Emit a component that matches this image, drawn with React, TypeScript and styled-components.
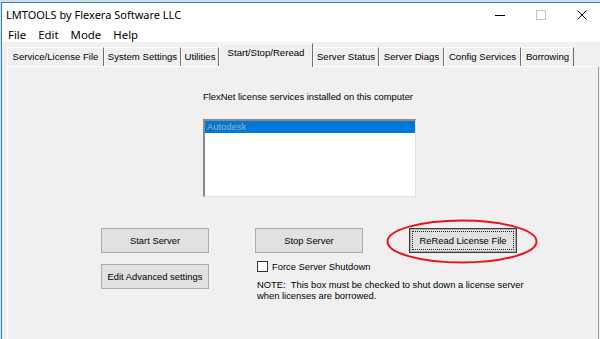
import React from 'react';
import styled, { createGlobalStyle } from 'styled-components';

const GlobalStyle = createGlobalStyle`
  html, body {
    margin: 0;
    padding: 0;
    background: #dcdcdc;
    overflow: hidden;
  }
  body {
    width: 600px;
    height: 339px;
  }
`;

const Window = styled.div`
  margin: 2px 0 0 1px;
  width: 600px;
  height: 337px;
  border-top: 1px solid #1e88d9;
  border-left: 1px solid #1e88d9;
  background: #f0f0f0;
  display: flex;
  flex-direction: column;
  font-family: 'Liberation Sans', Arial, sans-serif;
  color: #000;
  overflow: hidden;
`;

const TitleBar = styled.div`
  height: 23px;
  background: #fff;
  display: flex;
  align-items: center;
  flex-shrink: 0;
`;

const Title = styled.div`
  flex: 1;
  padding-left: 4px;
  font-family: 'Noto Sans', sans-serif;
  font-size: 11px;
  color: #000;
`;

const Controls = styled.div`
  display: flex;
  height: 100%;
`;

const ControlButton = styled.div`
  width: 41px;
  height: 100%;
  display: flex;
  align-items: center;
  justify-content: center;
`;

const MenuBar = styled.div`
  height: 16px;
  background: #fff;
  display: flex;
  align-items: center;
  flex-shrink: 0;
  font-family: 'Noto Sans', sans-serif;
  font-size: 11.4px;
`;

const MenuItem = styled.span`
  padding: 0 6px;
`;

const Client = styled.div`
  flex: 1;
  display: flex;
  flex-direction: column;
  padding-left: 5px;
  border-right: 1px solid #555;
`;

const TabStrip = styled.div`
  height: 24px;
  display: flex;
  align-items: flex-end;
  flex-shrink: 0;
  position: relative;
  z-index: 1;
`;

const Tab = styled.div<{ $w: number; $active?: boolean }>`
  box-sizing: border-box;
  width: ${p => p.$w}px;
  height: ${p => (p.$active ? 24 : 19)}px;
  margin-bottom: ${p => (p.$active ? -1 : 0)}px;
  padding-top: 3px;
  border-top: 1px solid #fff;
  border-left: 1px solid #fff;
  border-right: 1px solid #6d6d6d;
  background: #f0f0f0;
  font-size: 9.6px;
  text-align: center;
  white-space: nowrap;
`;

const Panel = styled.div`
  flex: 1;
  border-top: 1px solid #fff;
  border-left: 1px solid #fff;
  border-right: 1px solid #a0a0a0;
  margin-right: 2px;
  padding-top: 24px;
  font-size: 9.4px;
`;

const ServiceBlock = styled.div`
  margin-left: 195px;
  width: 213px;
`;

const Caption = styled.div`
  height: 12px;
  line-height: 12px;
  white-space: nowrap;
`;

const ListBox = styled.div`
  margin-top: 16px;
  box-sizing: border-box;
  height: 78px;
  background: #fff;
  border-top: 2px solid #8a8a8a;
  border-left: 2px solid #8a8a8a;
  border-right: 1px solid #e3e3e3;
  border-bottom: 1px solid #e3e3e3;
`;

const ListItem = styled.div<{ $selected?: boolean }>`
  height: 12px;
  line-height: 12px;
  padding-left: 2px;
  background: ${p => (p.$selected ? '#0078d7' : 'transparent')};
  color: ${p => (p.$selected ? '#9fb1c4' : '#000')};
`;

const ButtonGrid = styled.div`
  margin: 31px 0 0 93px;
  display: grid;
  grid-template-columns: 108px 108px 108px;
  column-gap: 46px;
  row-gap: 11px;
  position: relative;
`;

const Button = styled.div<{ $default?: boolean }>`
  box-sizing: border-box;
  height: 25px;
  display: flex;
  align-items: center;
  justify-content: center;
  background: #e1e1e1;
  border: 1px solid ${p => (p.$default ? '#3c3c3c' : '#adadad')};
  box-shadow: ${p => (p.$default ? 'inset 0 0 0 1px #adadad' : 'none')};
  padding: 2px;
  white-space: nowrap;
`;

const FocusRect = styled.span`
  flex: 1;
  align-self: stretch;
  display: flex;
  align-items: center;
  justify-content: center;
  border: 1px dotted #222;
`;

const ShutdownColumn = styled.div`
  margin-top: -4px;
  padding-left: 2px;
  white-space: nowrap;
`;

const CheckRow = styled.label`
  display: flex;
  align-items: center;
  gap: 4px;
  height: 12px;
`;

const CheckBox = styled.span`
  box-sizing: border-box;
  flex-shrink: 0;
  width: 11px;
  height: 11px;
  background: #fff;
  border: 1px solid #333;
`;

const Note = styled.div`
  margin-top: 7px;
  line-height: 11px;
`;

const Highlight = styled.svg`
  position: absolute;
  left: 285px;
  top: -9px;
  pointer-events: none;
`;

const tabs: { label: string; w: number; active?: boolean }[] = [
  { label: 'Service/License File', w: 97 },
  { label: 'System Settings', w: 77 },
  { label: 'Utilities', w: 38 },
  { label: 'Start/Stop/Reread', w: 94, active: true },
  { label: 'Server Status', w: 66 },
  { label: 'Server Diags', w: 65 },
  { label: 'Config Services', w: 77 },
  { label: 'Borrowing', w: 53 },
];

const App: React.FC = () => {
  return (
    <>
      <GlobalStyle />
      <Window>
        <TitleBar>
          <Title>LMTOOLS by Flexera Software LLC</Title>
          <Controls>
            <ControlButton>
              <svg width="10" height="10" viewBox="0 0 10 10">
                <line x1="0" y1="5.5" x2="10" y2="5.5" stroke="#000" strokeWidth="1" />
              </svg>
            </ControlButton>
            <ControlButton>
              <svg width="10" height="10" viewBox="0 0 10 10">
                <rect x="0.5" y="0.5" width="9" height="9" fill="none" stroke="#c4c4c4" strokeWidth="1" />
              </svg>
            </ControlButton>
            <ControlButton>
              <svg width="10" height="10" viewBox="0 0 10 10">
                <path d="M0.5 0.5 L9.5 9.5 M9.5 0.5 L0.5 9.5" stroke="#000" strokeWidth="1" />
              </svg>
            </ControlButton>
          </Controls>
        </TitleBar>
        <MenuBar>
          <MenuItem>File</MenuItem>
          <MenuItem>Edit</MenuItem>
          <MenuItem>Mode</MenuItem>
          <MenuItem>Help</MenuItem>
        </MenuBar>
        <Client>
          <TabStrip>
            {tabs.map(t => (
              <Tab key={t.label} $w={t.w} $active={t.active}>
                {t.label}
              </Tab>
            ))}
          </TabStrip>
          <Panel>
            <ServiceBlock>
              <Caption>FlexNet license services installed on this computer</Caption>
              <ListBox>
                <ListItem $selected>Autodesk</ListItem>
              </ListBox>
            </ServiceBlock>
            <ButtonGrid>
              <Button>Start Server</Button>
              <Button>Stop Server</Button>
              <Button $default>
                <FocusRect>ReRead License File</FocusRect>
              </Button>
              <Button>Edit Advanced settings</Button>
              <ShutdownColumn>
                <CheckRow>
                  <CheckBox />
                  Force Server Shutdown
                </CheckRow>
                <Note>
                  NOTE:&nbsp; This box must be checked to shut down a license server
                  <br />
                  when licenses are borrowed.
                </Note>
              </ShutdownColumn>
              <Highlight width="152" height="45" viewBox="0 0 152 45">
                <ellipse cx="76" cy="22.5" rx="74.5" ry="21" fill="none" stroke="#e8141a" strokeWidth="2" />
              </Highlight>
            </ButtonGrid>
          </Panel>
        </Client>
      </Window>
    </>
  );
};

export default App;
